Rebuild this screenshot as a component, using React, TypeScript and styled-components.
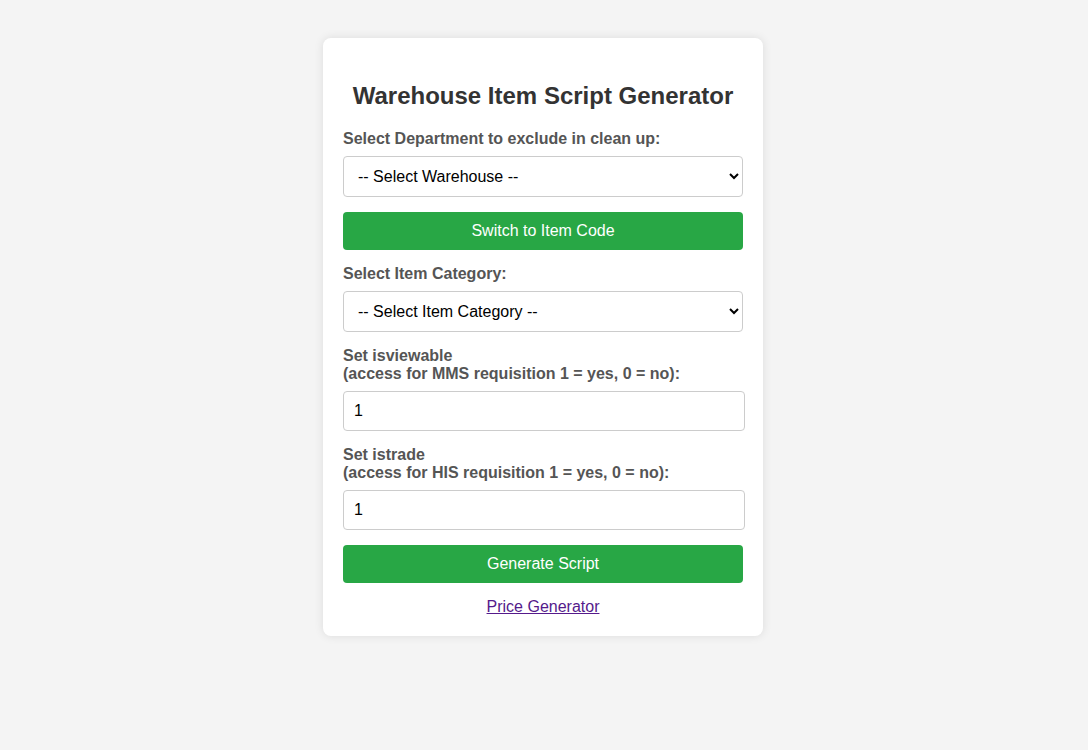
import React from "react";
import styled, { createGlobalStyle } from "styled-components";

const GlobalStyle = createGlobalStyle`
  html, body {
    margin: 0;
    padding: 0;
  }
  body {
    background: #f4f4f4;
    font-family: "Liberation Sans", Arial, sans-serif;
    padding: 8px 10px 8px 8px;
  }
`;

const Card = styled.div`
  max-width: 400px;
  margin: 30px auto 0;
  padding: 20px;
  background: #ffffff;
  border-radius: 8px;
  box-shadow: 0 0 10px rgba(0, 0, 0, 0.1);
`;

const Title = styled.h2`
  margin: 24px 0 20px;
  font-size: 24px;
  font-weight: bold;
  color: #333333;
  text-align: center;
`;

const Label = styled.label`
  display: block;
  margin-bottom: 8px;
  font-size: 16px;
  font-weight: bold;
  color: #555555;
`;

const Select = styled.select`
  display: block;
  box-sizing: border-box;
  width: 100%;
  height: 41px;
  margin: 0 0 15px;
  padding: 10px;
  font-family: "Liberation Sans", Arial, sans-serif;
  font-size: 16px;
  color: #000;
  background: #fff;
  border: 1px solid #cccccc;
  border-radius: 4px;
`;

const Input = styled.input`
  display: block;
  box-sizing: border-box;
  width: calc(100% + 2px);
  height: 40px;
  margin: 0 0 15px;
  padding: 10px;
  font-family: "Liberation Sans", Arial, sans-serif;
  font-size: 16px;
  color: #000;
  background: #fff;
  border: 1px solid #cccccc;
  border-radius: 4px;
`;

const Button = styled.button`
  display: block;
  box-sizing: border-box;
  width: 100%;
  height: 38px;
  margin: 0 0 15px;
  padding: 10px;
  font-family: "Liberation Sans", Arial, sans-serif;
  font-size: 16px;
  color: #ffffff;
  background: #28a745;
  border: none;
  border-radius: 4px;
  cursor: pointer;
`;

const LinkRow = styled.div`
  margin-top: 0;
  text-align: center;
  font-size: 16px;
  line-height: normal;
`;

const Link = styled.a`
  color: #551a8b;
  text-decoration: underline;
`;

export default function App() {
  return (
    <>
      <GlobalStyle />
      <Card>
        <Title>Warehouse Item Script Generator</Title>
        <Label htmlFor="warehouse">Select Department to exclude in clean up:</Label>
        <Select id="warehouse" defaultValue="">
          <option value="">-- Select Warehouse --</option>
        </Select>
        <Button type="button">Switch to Item Code</Button>
        <Label htmlFor="category">Select Item Category:</Label>
        <Select id="category" defaultValue="">
          <option value="">-- Select Item Category --</option>
        </Select>
        <Label htmlFor="isviewable">
          Set isviewable
          <br />
          (access for MMS requisition 1 = yes, 0 = no):
        </Label>
        <Input id="isviewable" type="text" defaultValue="1" />
        <Label htmlFor="istrade">
          Set istrade
          <br />
          (access for HIS requisition 1 = yes, 0 = no):
        </Label>
        <Input id="istrade" type="text" defaultValue="1" />
        <Button type="button">Generate Script</Button>
        <LinkRow>
          <Link href="#price">Price Generator</Link>
        </LinkRow>
      </Card>
    </>
  );
}
